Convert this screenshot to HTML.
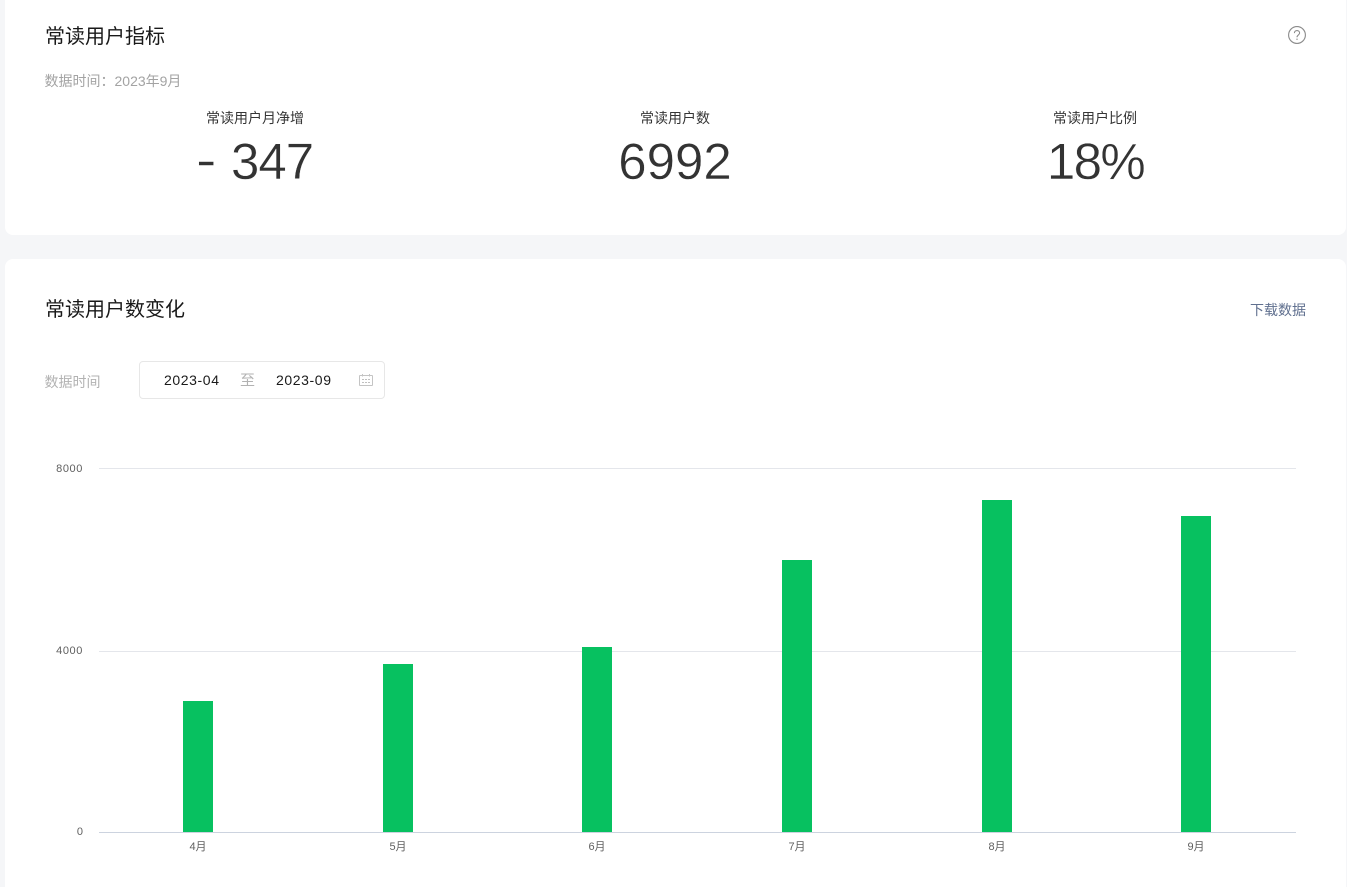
<!DOCTYPE html>
<html lang="zh-CN">
<head>
<meta charset="utf-8">
<title>常读用户指标</title>
<style>
html,body{margin:0;padding:0;width:1347px;height:887px;overflow:hidden;}
body{background:#f5f6f8;position:relative;font-family:"Liberation Sans","Noto Sans CJK SC",sans-serif;}
.card{position:absolute;background:#fff;left:5px;width:1341px;border-radius:8px;}
.t{position:absolute;white-space:nowrap;}
.c{transform:translateX(-50%);}
.ttl{font-size:20px;line-height:26px;color:#191919;}
.lab{font-size:14px;line-height:18px;color:#353535;}
.num{font-size:51px;line-height:60px;color:#333;-webkit-text-stroke:.4px #fff;}
.ax{font-size:11px;line-height:14px;color:#5f5f5f;}
.bar{position:absolute;width:30px;background:#07c160;}
.gl{position:absolute;left:99px;width:1197px;height:1px;background:#e4e6eb;}
.date{font-size:14px;line-height:18px;color:#1a1a1a;letter-spacing:.6px;}
</style>
</head>
<body>
<div class="card" style="top:-10px;height:245px;"></div>
<div class="card" style="top:259px;height:628px;border-radius:8px 8px 0 0;"></div>

<div class="t ttl" style="left:45px;top:24px;">常读用户指标</div>
<svg style="position:absolute;left:1288px;top:26px;" width="18" height="18" viewBox="0 0 18 18" fill="none" stroke="#8a8a8a" stroke-width="1.1">
<circle cx="9" cy="9" r="8.4"/>
<path d="M6.4 7.1C6.4 5.6 7.5 4.6 9 4.6s2.6 1 2.6 2.4c0 1.9-2.6 2-2.6 4.2"/>
<path d="M9 12.6v1.3" stroke-width="1.2"/>
</svg>
<div class="t" style="left:44.5px;top:71px;font-size:14px;line-height:20px;color:#a3a3a3;">数据时间：2023年9月</div>

<div class="t lab c" style="left:255px;top:109px;">常读用户月净增</div>
<div class="t lab c" style="left:675px;top:109px;">常读用户数</div>
<div class="t lab c" style="left:1095px;top:109px;">常读用户比例</div>

<div class="t num" style="left:195.5px;top:130px;transform:scaleX(1.2);transform-origin:left center;">-</div>
<div class="t num" style="left:231px;top:132px;letter-spacing:-1px;">347</div>
<div class="t num c" style="left:675px;top:132px;">6992</div>
<div class="t num c" style="left:1095.5px;top:132px;letter-spacing:-1.6px;">18%</div>

<div class="t ttl" style="left:45px;top:297px;">常读用户数变化</div>
<div class="t" style="left:1250px;top:300px;font-size:14px;line-height:20px;color:#60708f;">下载数据</div>

<div class="t" style="left:44.5px;top:372px;font-size:14px;line-height:20px;color:#b2b2b2;">数据时间</div>
<div style="position:absolute;left:139px;top:361px;width:244px;height:36px;border:1px solid #e7e7e7;border-radius:4px;"></div>
<div class="t date" style="left:164px;top:371px;">2023-04</div>
<div class="t" style="left:240px;top:372px;font-size:15px;line-height:18px;color:#b2b2b2;">至</div>
<div class="t date" style="left:276px;top:371px;">2023-09</div>
<svg style="position:absolute;left:358px;top:373px;" width="16" height="14" viewBox="0 0 16 14" fill="none" stroke="#c4c4c4" stroke-width="1">
<rect x="1.5" y="2.5" width="13" height="10" rx="0.5"/>
<path d="M4.5 1v2.5M11.5 1v2.5"/>
<path d="M4 6.5h2M7 6.5h2M10 6.5h2M4 9.5h2M7 9.5h2M10 9.5h2" stroke="#c0c0c0"/>
</svg>

<div class="gl" style="top:468px;"></div>
<div class="gl" style="top:651px;"></div>
<div class="gl" style="top:832px;background:#ccd3df;"></div>

<div class="t ax" style="right:1264px;top:462px;letter-spacing:.6px;">8000</div>
<div class="t ax" style="right:1264px;top:644px;letter-spacing:.6px;">4000</div>
<div class="t ax" style="right:1264px;top:825px;">0</div>

<div class="bar" style="left:183px;top:701px;height:131px;"></div>
<div class="bar" style="left:383px;top:664px;height:168px;"></div>
<div class="bar" style="left:582px;top:647px;height:185px;"></div>
<div class="bar" style="left:782px;top:560px;height:272px;"></div>
<div class="bar" style="left:982px;top:500px;height:332px;"></div>
<div class="bar" style="left:1181px;top:516px;height:316px;"></div>

<div class="t ax c" style="left:198px;top:840px;">4月</div>
<div class="t ax c" style="left:398px;top:840px;">5月</div>
<div class="t ax c" style="left:597px;top:840px;">6月</div>
<div class="t ax c" style="left:797px;top:840px;">7月</div>
<div class="t ax c" style="left:997px;top:840px;">8月</div>
<div class="t ax c" style="left:1196px;top:840px;">9月</div>
</body>
</html>
